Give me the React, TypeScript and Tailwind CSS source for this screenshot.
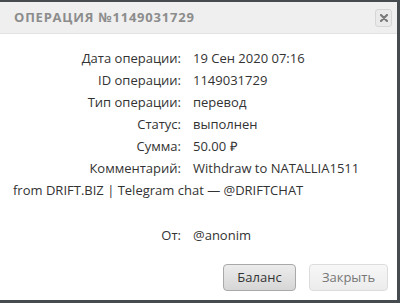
const rows: [string, string][] = [
  ['Дата операции:', '19 Сен 2020 07:16'],
  ['ID операции:', '1149031729'],
  ['Тип операции:', 'перевод'],
  ['Статус:', 'выполнен'],
  ['Сумма:', '50.00 ₽'],
  ['Комментарий:', 'Withdraw to NATALLIA1511'],
];

export default function App() {
  return (
    <div className="w-[400px] h-[303px] bg-[#464b50] pt-[2px] pr-[3px] pb-[3px] font-['Open_Sans',sans-serif]">
      <div className="bg-white h-full flex flex-col">
        {/* Header */}
        <div className="h-[32px] bg-[#efefef] border-b border-[#e2e2e2] flex items-center justify-between pl-[14px] pr-[5px]">
          <h2 className="text-[13px] font-bold tracking-[0.06em] text-[#8c8c8c] uppercase">
            Операция №1149031729
          </h2>
          <button className="w-[17px] h-[18px] rounded-[3px] border border-[#d6d6d6] bg-[#eaeaea] flex items-center justify-center text-[#7a7a7a]">
            <svg width="8" height="8" viewBox="0 0 8 8">
              <path d="M1 1L7 7M7 1L1 7" stroke="currentColor" strokeWidth="2.2" strokeLinecap="round" />
            </svg>
          </button>
        </div>

        {/* Content */}
        <div className="pt-[14px] text-[13px] text-[#333]">
          {rows.map(([label, value]) => (
            <div key={label} className="grid grid-cols-[181px_1fr] gap-x-[12px] h-[22px] items-center">
              <span className="text-right">{label}</span>
              <span>{value}</span>
            </div>
          ))}
          <div className="h-[22px] flex items-center pl-[13px]">
            from DRIFT.BIZ | Telegram chat — @DRIFTCHAT
          </div>
          <div className="grid grid-cols-[181px_1fr] gap-x-[12px] h-[22px] items-center mt-[23px]">
            <span className="text-right">От:</span>
            <span>@anonim</span>
          </div>
        </div>

        {/* Footer */}
        <div className="flex justify-end gap-[13px] pr-[9px] mt-[17px]">
          <button className="w-[73px] h-[27px] rounded-[4px] border border-[#a9a9a9] bg-gradient-to-b from-[#ececec] to-[#d6d6d6] text-[13px] text-[#333]">
            Баланс
          </button>
          <button className="w-[79px] h-[27px] rounded-[4px] border border-[#dcdcdc] bg-gradient-to-b from-[#f7f7f7] to-[#ececec] text-[13px] text-[#777]">
            Закрыть
          </button>
        </div>
      </div>
    </div>
  );
}
